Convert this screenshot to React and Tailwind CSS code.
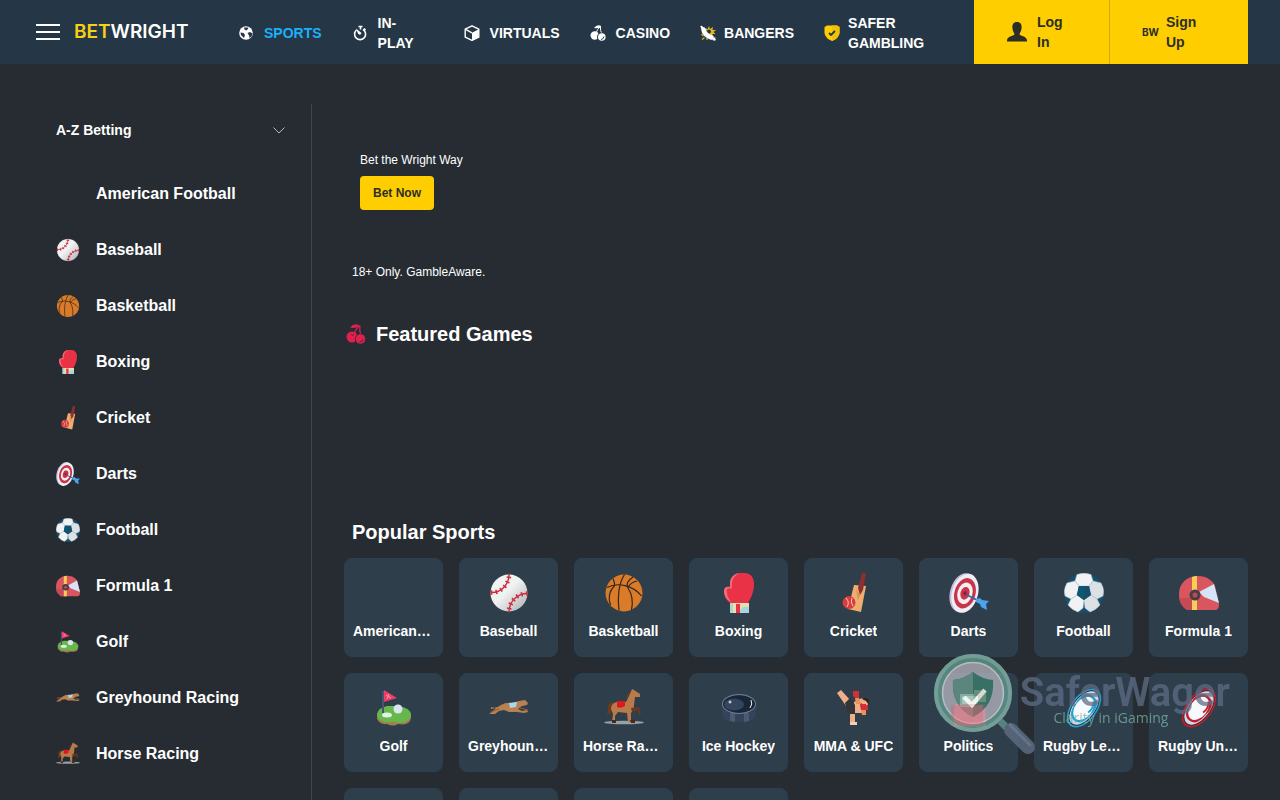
import React, { useState } from 'react';

const seams = 'M20 0.5c0.5 10-7 19.500-18.500 19M20 39.500c0-11 8-19 18.500-19';

function Baseball({ className }) {
    return (
        <svg className={className} viewBox="0 0 40 40" fill="none" aria-hidden="true">
            <defs>
                <linearGradient id="ballShade" x1="0" y1="0" x2="1" y2="1">
                    <stop offset="0.45" stopColor="#f1f2f2" />
                    <stop offset="1" stopColor="#a9adb0" />
                </linearGradient>
            </defs>
            <circle cx="20" cy="20" r="18.500" fill="url(#ballShade)" />
            <path d={seams} stroke="#c8283a" strokeWidth="1.400" />
            <path d={seams} stroke="#d22f42" strokeWidth="4.500" strokeDasharray="1.600 3.400" strokeDashoffset="-3" />
        </svg>
    );
}

function Basketball({ className }) {
    return (
        <svg className={className} viewBox="0 0 40 40" fill="none" aria-hidden="true">
            <circle cx="20" cy="20" r="18.500" fill="#d97b29" />
            <path
                d="M3 14.500C13 9 29 12 37.500 23M9 5.500c1.500 3.500 2 5 1.500 7.500M10.500 13C5 18 4 26 6.500 32M20.500 1.500C15 10 13 24 15 37.500M29 4C23 8 22 12 24 15c4 6 5 15 3.500 22M24 14c3-4 6-5.500 9-6"
                stroke="#33261c"
                strokeWidth="1.200"
            />
        </svg>
    );
}

function Boxing({ className }) {
    return (
        <svg className={className} viewBox="0 0 40 40" aria-hidden="true">
            <path d="M11 9C12 3 17 0 22 0h4c6 0 9 5 9 11 0 8-3 14-6 19H11C7 27 5 22 5 18c0-4 3-5 6-4z" fill="#e93246" />
            <path d="M11 9C12 3 17 0 21 0c-5 2-8 6-8 11 0 3 0 4-1 5-3-2-5 0-4 4 0 3 2 6 4 9C7 27 5 22 5 18c0-4 3-5 6-4z" fill="#f16b78" />
            <path d="M11 30h19v10H11z" fill="#e7e0ae" />
            <path d="M11 30h3v10h-3z" fill="#a9d5d6" />
            <path d="M17 31h4v9h-4z" fill="#e93246" />
            <path d="M21 40c0-5 3-7 9-6v6z" fill="#a8d3e2" />
        </svg>
    );
}

function Cricket({ className }) {
    return (
        <svg className={className} viewBox="0 0 40 40" aria-hidden="true">
            <path d="M20 12l12 1-5 26-13-3z" fill="#f0ad70" />
            <path d="M28 0h4l-3 17-3 5-2-7z" fill="#8c2f31" />
            <path d="M22 16l4 6-2 5z" fill="#d98f58" />
            <circle cx="15" cy="29.500" r="6.500" fill="#d63d3d" />
            <path d="M12 25q4 4 1 9M18 25q-2 4 1 8" stroke="#f8c7bf" fill="none" />
        </svg>
    );
}

function Darts({ className }) {
    return (
        <svg className={className} viewBox="0 0 40 40" aria-hidden="true">
            <g transform="rotate(16 15 20)">
                <ellipse cx="14" cy="20" rx="13" ry="20" fill="#c6bddb" />
                <ellipse cx="16" cy="20" rx="13" ry="20" fill="#efedf5" />
                <ellipse cx="16" cy="20" rx="10.500" ry="15.500" fill="#c93448" />
                <ellipse cx="16" cy="20" rx="7.500" ry="11" fill="#f5eff4" />
                <ellipse cx="16" cy="20" rx="4.500" ry="6.500" fill="#c93448" />
                <ellipse cx="16" cy="20" rx="1.500" ry="2" fill="#7c2537" />
            </g>
            <path d="M18 22l14 7" stroke="#2a6aa8" strokeWidth="1.600" />
            <path d="M27 26l4-1 2 2 7 1-3 3 1 6-6-3-1-3-4-2z" fill="#4aa3ee" />
        </svg>
    );
}

function Football({ className }) {
    return (
        <svg className={className} viewBox="0 0 40 40" aria-hidden="true">
            <circle cx="20" cy="20" r="20" fill="#174e6b" />
            <g stroke="#b9c6ce" strokeWidth="0.500">
                <path d="M13 1.500Q20-1 27 1.500L29 8 25 13H15L11 8z" fill="#f0f2f3" />
                <path d="M3 10l8-2 4 5-2 9-6 4-6-3Q-1 16 3 10z" fill="#f0f2f3" />
                <path d="M37 10l-8-2-4 5 2 9 6 4 6-3q2-7-2-13z" fill="#dbe1e4" />
                <path d="M7 26l6-4 7 5-1 8-5 4Q8 37 4 32z" fill="#f0f2f3" />
                <path d="M33 26l-6-4-7 5 1 8 5 4q6-2 10-7z" fill="#dbe1e4" />
            </g>
            <path d="M15 13h10l2 9-7 5-7-5z" fill="#174e6b" />
            <path d="M20 13v14l-7-5 2-9z" fill="#0e5673" />
        </svg>
    );
}

function Formula({ className }) {
    return (
        <svg className={className} viewBox="0 0 40 40" aria-hidden="true">
            <path d="M8 37C2 33 0 27 0 21 0 10 8 3 19 3c9 0 15 5 17 10l4 18c0 4-1 6-5 6z" fill="#d9565f" />
            <path d="M0 25c1 6 4 9 8 12h10L11 25z" fill="#c44b56" />
            <path d="M13 4q3-1 5-1v34h-5z" fill="#f8ce57" />
            <path d="M20 19l15-8 5 19-15-6z" fill="#d5e4f7" />
            <circle cx="16" cy="22" r="5.500" fill="#4a3d46" />
            <circle cx="16" cy="22" r="2.500" fill="#b94c58" />
        </svg>
    );
}

function Golf({ className }) {
    return (
        <svg className={className} viewBox="0 0 40 40" aria-hidden="true">
            <path d="M3 25v6q3 6 10 5 6 3 11 0 12 2 13-6v-5z" fill="#a9784b" />
            <ellipse cx="14" cy="26.500" rx="11" ry="8" fill="#66b74c" />
            <ellipse cx="26" cy="27" rx="11" ry="8" fill="#66b74c" />
            <path d="M12 18h14l5 3-4 13-14-1z" fill="#66b74c" />
            <ellipse cx="13" cy="27" rx="5" ry="2.500" fill="#e6efe9" />
            <path d="M9 3v22" stroke="#48526c" strokeWidth="2" />
            <path d="M10 2l13 8-13 4z" fill="#ee3d68" />
            <path d="M12 7l5 3M15 6l-2 5" stroke="#f796ae" strokeWidth="1" />
            <circle cx="24" cy="21" r="4.500" fill="#dce5ef" />
        </svg>
    );
}

function Greyhound({ className }) {
    return (
        <svg className={className} viewBox="0 0 40 40" aria-hidden="true">
            <path
                d="M2 19q5 2 10-2 5-3 11-2l7-2 6-1 3 3-1 2-5 1-4 3 4 2 5-1 1 2-4 1-7-1-8 0-5-2-5 1-4 3-4 0-2 0 4-3 3-3-5 1z"
                fill="#b98052"
            />
            <path d="M20 15l8-1-1 5-6 1z" fill="#a9d7ec" />
            <path d="M31 20l8 2M2 24l8-3" stroke="#925f3b" strokeWidth="1" />
        </svg>
    );
}

function Horse({ className }) {
    return (
        <svg className={className} viewBox="0 0 40 40" aria-hidden="true">
            <ellipse cx="20" cy="34.500" rx="20" ry="1.800" fill="#98a1a6" />
            <path d="M11 15q-7-2-7 5 0 4-1 7 5-1 5-6zM23 12l4-11-5 8z" fill="#683b20" />
            <path d="M10 15q5-3 12-1l3-6 3-7 2 1 6 4 0 3-5 0-1 8q0 5-3 8v9h-3l-1-9-9-1-3 4v6H8l1-8-2-5q0-4 3-6z" fill="#b8794b" />
            <path d="M27 20l8-1 2 6-2 3-1-6-6 2z" fill="#683b20" />
            <path d="M13 13h8v5q-4 3-8 1z" fill="#dd1820" />
            <path d="M8 32h4v3H8zM26 32h5v3h-4z" fill="#4b2a19" />
        </svg>
    );
}

function Hockey({ className }) {
    return (
        <svg className={className} viewBox="0 0 40 40" aria-hidden="true">
            <path d="M3 16v11q1 7 17 7t17-7V16z" fill="#35435a" />
            <path d="M11 25h5v9l-5-1zM25 25h5v8l-5 1z" fill="#4c5a72" />
            <ellipse cx="20" cy="16" rx="17" ry="10" fill="#6f7f97" />
            <ellipse cx="20" cy="16" rx="16" ry="9" fill="#1a2638" />
            <ellipse cx="15" cy="16.500" rx="10" ry="6" fill="#34465e" />
            <path d="M32 12q2 4-1 8" stroke="#ecf2f8" fill="none" />
            <path d="M9.500 14h3M11 12.500v3" stroke="#ecf2f8" fill="none" />
        </svg>
    );
}

function Fighter({ className }) {
    return (
        <svg className={className} viewBox="0 0 40 40" aria-hidden="true">
            <path d="M3 5l4-3 10 11-5 5zM16 26h5v11h-5zM20 14l8-4 3 4-2 11h-9z" fill="#f0b087" />
            <path d="M11 15l5-5 5 7v9h-7z" fill="#343439" />
            <path d="M19 3h6v7h-4l-2-2zM26 15h8v7h-7z" fill="#d02f35" />
            <path d="M21 10l4 0 2 6-5 0zM27 22h5v5h-4z" fill="#e8935f" />
            <circle cx="31" cy="14" r="3.500" fill="#f0b087" />
            <path d="M28 11q4-3 7 1l0 5-3-4z" fill="#302326" />
            <path d="M26 16h6v5h-5z" fill="#d02f35" />
            <path d="M16 34h7v3h-7z" fill="#f6cdb0" />
        </svg>
    );
}

function Ballot({ className }) {
    return (
        <svg className={className} viewBox="0 0 40 40" aria-hidden="true">
            <path d="M6 16h30l1 23H4z" fill="#e8384f" />
            <path d="M13 8h16v9H13z" fill="#e9f3ee" />
            <path d="M12 16h18v2H12z" fill="#95253a" />
        </svg>
    );
}

function Rugby({ className, rim }) {
    return (
        <svg className={className} viewBox="0 0 40 40" fill="none" aria-hidden="true">
            <g transform="rotate(38 20 20)">
                <ellipse cx="20" cy="20" rx="13" ry="22.500" fill={rim} />
                <ellipse cx="20" cy="20" rx="11.500" ry="20.500" fill="#27313d" />
                <ellipse cx="20" cy="20" rx="10.500" ry="19.500" fill="#d3d9e4" />
                <path d="M10 16Q11 5 20 5t10 11l-1 11Q27 36 20 36t-9-9z" fill={rim} />
                <ellipse cx="20" cy="20.500" rx="8.500" ry="13" fill="#f7f9fc" />
                <path d="M24 9q4 6 2 12" stroke={rim} strokeWidth="2" />
            </g>
        </svg>
    );
}

function RugbyLeague({ className }) {
    return <Rugby className={className} rim="#239fd1" />;
}

function RugbyUnion({ className }) {
    return <Rugby className={className} rim="#c41e2b" />;
}

function Snooker({ className }) {
    return (
        <svg className={className} viewBox="0 0 40 40" aria-hidden="true">
            <circle cx="20" cy="20" r="18" fill="#c6293a" />
            <circle cx="14" cy="13" r="4" fill="#f0a0a8" />
        </svg>
    );
}

function Tennis({ className }) {
    return (
        <svg className={className} viewBox="0 0 40 40" aria-hidden="true">
            <circle cx="20" cy="20" r="18" fill="#c9dd4b" />
            <path d="M7 8q14 12 0 24M33 8q-14 12 0 24" stroke="#fff" strokeWidth="2" fill="none" />
        </svg>
    );
}

function Cherries({ className }) {
    return (
        <svg className={className} viewBox="0 0 20 20" aria-hidden="true">
            <path d="M4 3.500Q8-1.500 13 1q-2 4-9 2.500z" fill="currentColor" />
            <path d="M14 1.500q-5 4-6 9M14 1.500q-1 5 1 10" stroke="currentColor" strokeWidth="1.200" fill="none" />
            <circle cx="6" cy="13" r="5.500" fill="currentColor" />
            <circle cx="14.500" cy="15" r="5.500" className="fill-[#262c32]" />
            <circle cx="14.500" cy="15" r="4.800" fill="currentColor" />
            <path d="M13.500 18q3 0 4-3M5 10.500q2 1.500 3 0" className="stroke-[#262c32]" strokeWidth="0.800" fill="none" />
        </svg>
    );
}

function Globe({ className }) {
    return (
        <svg className={className} viewBox="0 0 16 16" aria-hidden="true">
            <circle cx="8" cy="8" r="6.800" fill="#fff" />
            <path d="M6 2.500h4.500l-1 2L8 5.500 6.500 4.500zM2.500 7.500l3 .5 1.500 2-1 3-3-3zM9.500 8l2.500-1 2.500 1.500-1 3-2 1.500-.5-2.500z" fill="#253746" />
        </svg>
    );
}

function Stopwatch({ className }) {
    return (
        <svg className={className} viewBox="0 0 16 16" fill="none" stroke="#fff" aria-hidden="true">
            <path d="M4.500 5a5.500 5.500 0 1 0 6.500-.5" strokeWidth="1.600" />
            <path d="M6.500 1.500h4M8.500 1.500v3M12 3.500l1.500 1.500" strokeWidth="1.600" />
            <path d="M4 3.500l5.500 4.500-1.500 2-2-1.500z" fill="#fff" stroke="none" />
        </svg>
    );
}

function Cube({ className }) {
    return (
        <svg className={className} viewBox="0 0 16 16" aria-hidden="true">
            <path d="M8 .8l6.800 3.400v8L8 15.400l-6.800-3.200v-8z" fill="none" stroke="#fff" strokeWidth="1.400" strokeLinejoin="round" />
            <path d="M8 7.800l6.800-3.600v8L8 15.400z" fill="#fff" />
            <path d="M1.200 4.200L8 7.800" stroke="#fff" strokeWidth="1.400" />
        </svg>
    );
}

function NavCherries({ className }) {
    return (
        <svg className={className} viewBox="0 0 16 16" aria-hidden="true">
            <path d="M4 3q3-4 7-2-2 3-7 2z" fill="#fff" />
            <path d="M11 1q-4 3-5 7M10.500 1q-.5 5 1.500 8" stroke="#fff" fill="none" />
            <circle cx="4.700" cy="10.500" r="4.200" fill="#fff" />
            <circle cx="11.500" cy="12" r="4.500" fill="#253746" />
            <circle cx="11.800" cy="12" r="3.800" fill="#fff" />
            <path d="M11 14.500q2 0 3-3" stroke="#253746" fill="none" />
        </svg>
    );
}

function Banger({ className }) {
    return (
        <svg className={className} viewBox="0 0 16 16" fill="none" aria-hidden="true">
            <path d="M6 3l1.500 1.500L9 1l1 3 3-2-.5 3L16 5l-2.500 2 2 2-3 0 0 2.500L6 5z" fill="#e3b91a" />
            <circle cx="9" cy="6.500" r="2" fill="#253746" />
            <path d="M1.500 9l2 2M2 14.500l2.500-2M7 15l0-2" stroke="#e3b91a" strokeWidth="1.200" />
            <path d="M3.500 4.500q1 5.500 8 8" stroke="#fff" strokeWidth="4.600" strokeLinecap="round" />
            <path d="M3 4L.8 1M12 13l3.500 2M1 3l2-1M13.500 15.500l1.500-3" stroke="#fff" strokeWidth="1.500" />
        </svg>
    );
}

function SafeShield({ className }) {
    return (
        <svg className={className} viewBox="0 0 16 16" fill="none" aria-hidden="true">
            <path d="M3 .5h10l2.500 1.500v6Q15 13 8 16 1 13 .5 8V2z" fill="#ffce00" />
            <path d="M8 .5h5l2.500 1.500v6Q15 13 8 16z" fill="#f0c205" />
            <path d="M5 8l2 2 4-4" stroke="#253746" strokeWidth="1.800" />
        </svg>
    );
}

function Magnifier({ className }) {
    return (
        <svg className={className} viewBox="0 0 102 100" fill="none" aria-hidden="true">
            <path d="M66 67l12 12" stroke="#5d8f8a" strokeWidth="7" />
            <path d="M77 76l17 17" stroke="#5d6b80" strokeWidth="14" strokeLinecap="round" />
            <path d="M76 71l20 20" stroke="#718096" strokeWidth="3" strokeLinecap="round" />
            <circle cx="39" cy="39" r="35" stroke="#5d968b" strokeWidth="8" />
            <circle cx="39" cy="39" r="37" stroke="#80b0a5" strokeWidth="4" />
            <circle cx="39" cy="39" r="31" fill="#b3b6bf" fillOpacity="0.900" />
            <circle cx="39" cy="39" r="30.500" stroke="#d3d4d9" strokeWidth="1.500" />
            <path d="M39 18q9 7 20 8 2 26-20 37-22-11-20-37 11-1 20-8z" fill="#3a7a6c" />
            <path d="M39 18v45q-22-11-20-37 11-1 20-8z" fill="#639286" />
            <path d="M26 40h14v13H26z" fill="#a7d3c3" fillOpacity="0.700" />
            <path d="M40 36h12v12H40z" fill="#93b68f" fillOpacity="0.600" />
            <path d="M17 51h32v18q-18 7-32-3z" fill="#e8707d" fillOpacity="0.400" />
            <path d="M30 43l8 8 13-15" stroke="#f3f4f3" strokeWidth="4.500" />
        </svg>
    );
}

const sports = [
    { name: 'American Football', Icon: null },
    { name: 'Baseball', Icon: Baseball },
    { name: 'Basketball', Icon: Basketball },
    { name: 'Boxing', Icon: Boxing },
    { name: 'Cricket', Icon: Cricket },
    { name: 'Darts', Icon: Darts },
    { name: 'Football', Icon: Football },
    { name: 'Formula 1', Icon: Formula },
    { name: 'Golf', Icon: Golf },
    { name: 'Greyhound Racing', Icon: Greyhound },
    { name: 'Horse Racing', Icon: Horse },
    { name: 'Ice Hockey', Icon: Hockey },
    { name: 'MMA & UFC', Icon: Fighter },
    { name: 'Politics', Icon: Ballot },
    { name: 'Rugby League', Icon: RugbyLeague },
    { name: 'Rugby Union', Icon: RugbyUnion },
    { name: 'Snooker', Icon: Snooker },
    { name: 'Table Tennis', Icon: Tennis },
    { name: 'Tennis', Icon: Tennis },
    { name: 'Volleyball', Icon: Baseball },
];

const navItems = [
    { name: 'SPORTS', Icon: Globe, link: 'gap-2.5 text-[#1cb0f6]', text: '' },
    { name: 'IN-PLAY', Icon: Stopwatch, link: 'gap-2.5', text: 'w-13 mr-1' },
    { name: 'VIRTUALS', Icon: Cube, link: 'gap-2.5', text: '' },
    { name: 'CASINO', Icon: NavCherries, link: 'gap-2.5', text: '' },
    { name: 'BANGERS', Icon: Banger, link: 'gap-2', text: '' },
    { name: 'SAFER GAMBLING', Icon: SafeShield, link: 'gap-2', text: 'w-20' },
];

function Header() {
    return (
        <header className="flex h-16 shrink-0 items-center justify-between bg-[#253746] pl-9 pr-8">
            <button type="button" aria-label="Menu" className="flex w-6 shrink-0 flex-col gap-[5px]">
                <span className="h-0.5 w-full bg-white" />
                <span className="h-0.5 w-full bg-white" />
                <span className="h-0.5 w-full bg-white" />
            </button>
            <a href="#home" className="ml-3.5 w-29 shrink-0 font-[Inter] text-[19px] font-semibold text-white">
                <span className="text-[#f7d117]">BET</span>WRIGHT
            </a>
            <nav className="ml-12 flex flex-1 items-center gap-[30px] pt-0.5">
                {navItems.map(({ name, Icon, link, text }) => (
                    <a key={name} href="#nav" className={`flex shrink-0 items-center text-sm font-bold ${link}`}>
                        <Icon className="size-4 shrink-0" />
                        <span className={text}>{name}</span>
                    </a>
                ))}
            </nav>
            <div className="flex h-full shrink-0 bg-[#ffce00] text-sm font-bold text-[#2b2e26]">
                <button type="button" className="flex w-34 items-center gap-2.5 border-r border-[#d1ab0b] pl-[33px] text-left">
                    <svg className="size-5" viewBox="0 0 20 20" fill="currentColor" aria-hidden="true">
                        <path d="M10 0c4 0 5 3 4.500 6.500-.3 3-1.500 4-2 5.500 0 2 7 2 7.500 6v1.500H0V18c.5-4 7.500-4 7.500-6-.5-1.500-1.700-2.500-2-5.500C5 3 6 0 10 0z" />
                    </svg>
                    <span className="w-8">Log In</span>
                </button>
                <button type="button" className="flex w-[138px] items-center gap-2 pl-8 text-left">
                    <span className="w-4 font-[Inter] text-[10px]">BW</span>
                    <span className="w-9">Sign Up</span>
                </button>
            </div>
        </header>
    );
}

function Sidebar() {
    const [open, setOpen] = useState(true);

    return (
        <aside className="w-70 shrink-0 border-r border-[#41464b] pl-6">
            <button
                type="button"
                onClick={() => setOpen(v => !v)}
                className="mb-2.5 flex h-13 w-full items-center justify-between pr-[26px] text-sm font-bold"
            >
                A-Z Betting
                <svg className="w-3" viewBox="0 0 12 7" fill="none" stroke="#b5b9bc" aria-hidden="true">
                    <path d="M0.500 0.500L6 6l5.500-5.500" />
                </svg>
            </button>
            {open && (
                <ul>
                    {sports.slice(0, 11).map(({ name, Icon }) => (
                        <li key={name}>
                            <a href="#sport" className="flex h-14 items-center gap-4 font-bold">
                                <span className="size-6">{Icon && <Icon className="size-6" />}</span>
                                {name}
                            </a>
                        </li>
                    ))}
                </ul>
            )}
        </aside>
    );
}

function SportCard({ name, Icon }) {
    return (
        <a
            href="#sport"
            className="flex aspect-square min-w-0 flex-col items-center gap-2 rounded-lg border border-[#2a4050] bg-[#2f3e4b] px-2 pt-3.5 text-sm font-bold"
        >
            <span className="size-10 shrink-0">{Icon && <Icon className="size-10" />}</span>
            <span className="max-w-full truncate">{name}</span>
        </a>
    );
}

export default function App() {
    return (
        <div className="flex h-screen flex-col overflow-hidden bg-[#262c32] font-['Liberation_Sans',sans-serif] text-white">
            <Header />
            <div className="flex flex-1 px-8 pt-10">
                <Sidebar />
                <main className="min-w-0 flex-1 pl-8">
                    <section className="px-4 pt-12 text-xs">
                        <p>Bet the Wright Way</p>
                        <button type="button" className="mt-2 h-[34px] rounded bg-[#ffce00] px-[13px] font-bold text-[#2b2e26]">
                            Bet Now
                        </button>
                    </section>
                    <p className="mt-[54px] px-2 text-xs">18+ Only. GambleAware.</p>
                    <section className="mt-10 h-[198px]">
                        <h2 className="flex items-center gap-2 text-xl font-bold">
                            <span className="w-6 pl-0.5">
                                <Cherries className="size-5 text-[#e0204f]" />
                            </span>
                            Featured Games
                        </h2>
                    </section>
                    <section>
                        <h2 className="px-2 text-xl font-bold">Popular Sports</h2>
                        <div className="mt-3 grid grid-cols-8 gap-4">
                            {sports.map(sport => (
                                <SportCard key={sport.name} {...sport} />
                            ))}
                        </div>
                    </section>
                </main>
            </div>
            <div className="pointer-events-none fixed bottom-[46px] right-[50px] flex">
                <Magnifier className="h-[100px] w-[102px] opacity-85" />
                <div className="-ml-4 pt-4 text-center opacity-75">
                    <p className="font-[Roboto] text-[40px] font-semibold leading-[46px] text-[#5f6d86]">SaferWager</p>
                    <p className="-mt-2 -ml-7 font-['Open_Sans'] text-sm text-[#79b3a6]">Clarity in iGaming</p>
                </div>
            </div>
        </div>
    );
}
